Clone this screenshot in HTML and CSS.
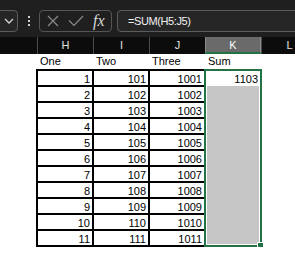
FILE: index.html
```html
<!DOCTYPE html>
<html lang="en">
<head>
    <meta charset="UTF-8">
    <meta name="viewport" content="width=device-width, initial-scale=1.0">
    <title>Sheet</title>
    <link rel="stylesheet" href="styles.css">
</head>
<body>
    <div class="toolbar">
        <div class="namebox">
            <svg width="10" height="6" viewBox="0 0 10 6"><polyline points="1,1 5,5 9,1" fill="none" stroke="#d4d4d4" stroke-width="1.3"/></svg>
        </div>
        <div class="dots"><i></i><i></i><i></i></div>
        <div class="fxgroup">
            <svg class="ic-x" width="12" height="12" viewBox="0 0 12 12"><path d="M1 1 L11 11 M11 1 L1 11" stroke="#8a8a8a" stroke-width="1.2"/></svg>
            <svg class="ic-check" width="16" height="12" viewBox="0 0 16 12"><polyline points="1,5.5 6,10.5 15,1" fill="none" stroke="#8a8a8a" stroke-width="1.2"/></svg>
            <span class="fx">fx</span>
        </div>
        <div class="formula">=SUM(H5:J5)</div>
    </div>

    <div class="colheads">
        <div class="colhead"></div>
        <div class="colhead">H</div>
        <div class="colhead">I</div>
        <div class="colhead">J</div>
        <div class="colhead active">K</div>
        <div class="colhead">L</div>
    </div>

    <div class="sheet">
        <div class="labels">
            <span>One</span><span>Two</span><span>Three</span><span>Sum</span>
        </div>
        <div class="block">
            <div class="tbl">
                <div>1</div><div>101</div><div>1001</div>
                <div>2</div><div>102</div><div>1002</div>
                <div>3</div><div>103</div><div>1003</div>
                <div>4</div><div>104</div><div>1004</div>
                <div>5</div><div>105</div><div>1005</div>
                <div>6</div><div>106</div><div>1006</div>
                <div>7</div><div>107</div><div>1007</div>
                <div>8</div><div>108</div><div>1008</div>
                <div>9</div><div>109</div><div>1009</div>
                <div>10</div><div>110</div><div>1010</div>
                <div>11</div><div>111</div><div>1011</div>
            </div>
            <div class="sel">
                <div class="first">1103</div>
                <div class="fill"></div>
                <div class="handle"></div>
            </div>
        </div>
    </div>
</body>
</html>
```

FILE: styles.css
```css
body {
    margin: 0;
    background: #fff;
    font-family: "Liberation Sans", Arial, sans-serif;
    font-size: 11px;
    overflow: hidden;
}

.toolbar {
    height: 37px;
    background: #1f1f1f;
    display: flex;
    align-items: flex-start;
    padding-top: 10px;
    box-sizing: border-box;
    overflow: hidden;
}

.namebox {
    width: 28px;
    height: 22px;
    margin-left: -10px;
    border: 1px solid #5c5c5c;
    border-radius: 4px;
    background: #262626;
    box-sizing: border-box;
    display: flex;
    align-items: center;
    padding-left: 13px;
}

.dots {
    margin-left: 10px;
    height: 22px;
    display: flex;
    flex-direction: column;
    justify-content: center;
    gap: 2px;
}

.dots i {
    display: block;
    width: 2px;
    height: 2px;
    background: #cfcfcf;
}

.fxgroup {
    margin-left: 9px;
    width: 73px;
    height: 22px;
    border: 1px solid #555;
    border-radius: 4px;
    box-sizing: border-box;
    display: flex;
    align-items: center;
    padding-left: 7px;
}

.ic-check {
    margin-left: 9px;
}

.fx {
    margin-left: 9px;
    font-family: "Liberation Serif", "Times New Roman", serif;
    font-style: italic;
    font-size: 16px;
    color: #d8d8d8;
    line-height: 20px;
}

.formula {
    flex: 1;
    margin-left: 5px;
    margin-right: -10px;
    height: 22px;
    border: 1px solid #5c5c5c;
    border-radius: 4px;
    background: #262626;
    box-sizing: border-box;
    color: #f2f2f2;
    padding-left: 10px;
    line-height: 20px;
    letter-spacing: -0.4px;
}

.colheads {
    display: grid;
    grid-template-columns: 37px repeat(5, 56px);
    height: 17px;
    background: #0c0c0c;
    overflow: hidden;
}

.colhead {
    border-left: 1px solid #4a4a4a;
    color: #e2e2e2;
    text-align: center;
    line-height: 15px;
    padding-top: 1px;
}

.colhead:first-child {
    border-left: none;
}

.colhead.active {
    background: #6a6a6a;
    border-left: 1px solid #8a8a8a;
    border-right: 1px solid #8a8a8a;
    border-bottom: 2px solid #217346;
    color: #fff;
    line-height: 14px;
}

.labels {
    display: grid;
    grid-template-columns: repeat(4, 56px);
    padding-left: 38px;
    height: 15px;
    line-height: 15px;
    color: #000;
}

.labels span {
    padding-left: 2px;
}

.block {
    display: flex;
    padding-left: 36px;
}

.tbl {
    display: grid;
    grid-template-columns: repeat(3, 54px);
    grid-auto-rows: 14px;
    gap: 2px;
    padding: 2px 0 2px 2px;
    background: #000;
}

.tbl div {
    background: #fff;
    text-align: right;
    padding-right: 2px;
    line-height: 16px;
    height: 14px;
    overflow: visible;
}

.sel {
    position: relative;
    width: 58px;
    height: 178px;
    border: 2px solid #217346;
    box-sizing: border-box;
    display: flex;
    flex-direction: column;
}

.sel .first {
    height: 14px;
    line-height: 16px;
    text-align: right;
    padding-right: 2px;
}

.sel .fill {
    flex: 1;
    margin: 1px;
    background: #c6c6c6;
}

.handle {
    position: absolute;
    right: -4px;
    bottom: -4px;
    width: 5px;
    height: 5px;
    background: #217346;
    border: 1px solid #fff;
}
```
